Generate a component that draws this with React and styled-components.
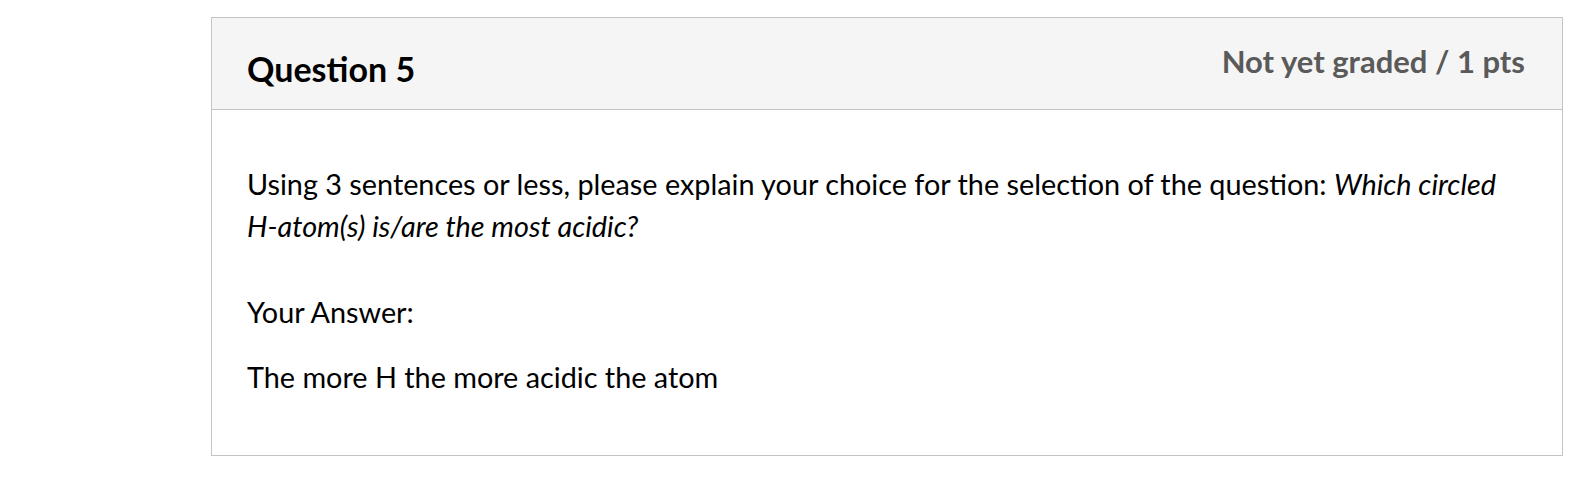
import styled, { createGlobalStyle } from "styled-components";

const GlobalStyle = createGlobalStyle`
  body {
    margin: 0;
    background: #fff;
    font-family: Lato, "Noto Sans", sans-serif;
    color: #000;
  }
`;

const Page = styled.div`
  padding: 17px 30px 0 211px;
`;

const Card = styled.div`
  border: 1px solid #c4c4c4;
  background: #fff;
`;

const Header = styled.div`
  display: flex;
  justify-content: space-between;
  align-items: flex-start;
  height: 92px;
  padding: 0 37px 0 35px;
  background: #f5f5f5;
  border-bottom: 1px solid #c4c4c4;
  box-sizing: border-box;
`;

const Title = styled.h2`
  margin: 31px 0 0;
  font-size: 34px;
  font-weight: 700;
  line-height: 40px;
  color: #000;
`;

const Points = styled.div`
  margin-top: 25px;
  font-size: 31px;
  font-weight: 700;
  line-height: 36px;
  color: #5a5a5a;
`;

const Body = styled.div`
  padding: 53px 37px 57px 35px;
`;

const Text = styled.p`
  margin: 0 0 ${(props) => props.gap || 0}px;
  font-size: 28.8px;
  line-height: 42px;
`;

const App = () => (
  <>
    <GlobalStyle />
    <Page>
      <Card>
        <Header>
          <Title>Question 5</Title>
          <Points>Not yet graded / 1 pts</Points>
        </Header>
        <Body>
          <Text gap={44}>
            Using 3 sentences or less, please explain your choice for the
            selection of the question:{" "}
            <em>Which circled H-atom(s) is/are the most acidic?</em>
          </Text>
          <Text gap={23}>Your Answer:</Text>
          <Text>The more H the more acidic the atom</Text>
        </Body>
      </Card>
    </Page>
  </>
);

export default App;
